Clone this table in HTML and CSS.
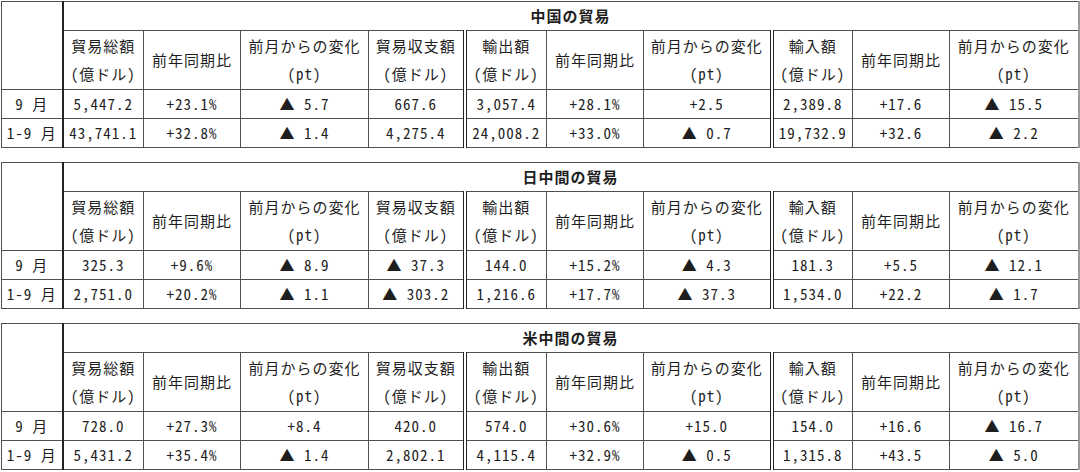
FILE: index.html
```html
<!DOCTYPE html>
<html lang="ja">
<head>
<meta charset="utf-8">
<link rel="stylesheet" href="styles.css">
</head>
<body>
<div class="page">

<table class="trade">
<colgroup>
<col class="c0"><col class="c1"><col class="c2"><col class="c3"><col class="c4"><col class="c5"><col class="c6"><col class="c7"><col class="c8"><col class="c9"><col class="c10">
</colgroup>
<tr class="r-title"><td class="lead" rowspan="2"></td><td class="title" colspan="10">中国の貿易</td></tr>
<tr class="r-head">
<td>貿易総額<br>（億ドル）</td><td>前年同期比</td><td>前月からの変化<br>（pt）</td><td>貿易収支額<br>（億ドル）</td>
<td class="dbl">輸出額<br>（億ドル）</td><td>前年同期比</td><td>前月からの変化<br>（pt）</td>
<td class="dbl">輸入額<br>（億ドル）</td><td>前年同期比</td><td>前月からの変化<br>（pt）</td>
</tr>
<tr class="r-data"><td class="lead">9 月</td><td>5,447.2</td><td>+23.1%</td><td>▲ 5.7</td><td>667.6</td><td class="dbl">3,057.4</td><td>+28.1%</td><td>+2.5</td><td class="dbl">2,389.8</td><td>+17.6</td><td>▲ 15.5</td></tr>
<tr class="r-data"><td class="lead">1-9 月</td><td>43,741.1</td><td>+32.8%</td><td>▲ 1.4</td><td>4,275.4</td><td class="dbl">24,008.2</td><td>+33.0%</td><td>▲ 0.7</td><td class="dbl">19,732.9</td><td>+32.6</td><td>▲ 2.2</td></tr>
</table>

<table class="trade">
<colgroup>
<col class="c0"><col class="c1"><col class="c2"><col class="c3"><col class="c4"><col class="c5"><col class="c6"><col class="c7"><col class="c8"><col class="c9"><col class="c10">
</colgroup>
<tr class="r-title"><td class="lead" rowspan="2"></td><td class="title" colspan="10">日中間の貿易</td></tr>
<tr class="r-head">
<td>貿易総額<br>（億ドル）</td><td>前年同期比</td><td>前月からの変化<br>（pt）</td><td>貿易収支額<br>（億ドル）</td>
<td class="dbl">輸出額<br>（億ドル）</td><td>前年同期比</td><td>前月からの変化<br>（pt）</td>
<td class="dbl">輸入額<br>（億ドル）</td><td>前年同期比</td><td>前月からの変化<br>（pt）</td>
</tr>
<tr class="r-data"><td class="lead">9 月</td><td>325.3</td><td>+9.6%</td><td>▲ 8.9</td><td>▲ 37.3</td><td class="dbl">144.0</td><td>+15.2%</td><td>▲ 4.3</td><td class="dbl">181.3</td><td>+5.5</td><td>▲ 12.1</td></tr>
<tr class="r-data"><td class="lead">1-9 月</td><td>2,751.0</td><td>+20.2%</td><td>▲ 1.1</td><td>▲ 303.2</td><td class="dbl">1,216.6</td><td>+17.7%</td><td>▲ 37.3</td><td class="dbl">1,534.0</td><td>+22.2</td><td>▲ 1.7</td></tr>
</table>

<table class="trade">
<colgroup>
<col class="c0"><col class="c1"><col class="c2"><col class="c3"><col class="c4"><col class="c5"><col class="c6"><col class="c7"><col class="c8"><col class="c9"><col class="c10">
</colgroup>
<tr class="r-title"><td class="lead" rowspan="2"></td><td class="title" colspan="10">米中間の貿易</td></tr>
<tr class="r-head">
<td>貿易総額<br>（億ドル）</td><td>前年同期比</td><td>前月からの変化<br>（pt）</td><td>貿易収支額<br>（億ドル）</td>
<td class="dbl">輸出額<br>（億ドル）</td><td>前年同期比</td><td>前月からの変化<br>（pt）</td>
<td class="dbl">輸入額<br>（億ドル）</td><td>前年同期比</td><td>前月からの変化<br>（pt）</td>
</tr>
<tr class="r-data"><td class="lead">9 月</td><td>728.0</td><td>+27.3%</td><td>+8.4</td><td>420.0</td><td class="dbl">574.0</td><td>+30.6%</td><td>+15.0</td><td class="dbl">154.0</td><td>+16.6</td><td>▲ 16.7</td></tr>
<tr class="r-data"><td class="lead">1-9 月</td><td>5,431.2</td><td>+35.4%</td><td>▲ 1.4</td><td>2,802.1</td><td class="dbl">4,115.4</td><td>+32.9%</td><td>▲ 0.5</td><td class="dbl">1,315.8</td><td>+43.5</td><td>▲ 5.0</td></tr>
</table>

</div>
</body>
</html>
```
FILE: styles.css
```css
html, body {
  margin: 0;
  padding: 0;
  background: #ffffff;
}

.page {
  padding: 1px 0 0 1px;
  display: flex;
  flex-direction: column;
  gap: 14px;
}

.trade {
  border-collapse: collapse;
  table-layout: fixed;
  width: 1077px;
  font-family: "Noto Sans CJK JP", "Noto Sans", sans-serif;
  font-feature-settings: "hwid" 1;
  font-size: 15px;
  letter-spacing: 1px;
  color: #1e1e1e;
  border-top: 1px solid #8a8a8a;
  border-right: 2px solid #9a9a9a;
  border-bottom: 1px solid #8a8a8a;
  border-left: 1px solid #444;
}

.c0 { width: 61px; }
.c1 { width: 81px; }
.c2 { width: 97px; }
.c3 { width: 128px; }
.c4 { width: 96px; }
.c5 { width: 82px; }
.c6 { width: 97px; }
.c7 { width: 128px; }
.c8 { width: 81px; }
.c9 { width: 97px; }
.c10 { width: 129px; }

.trade td {
  border: 1px solid #505050;
  text-align: center;
  vertical-align: middle;
  padding: 0;
  white-space: nowrap;
  overflow: hidden;
}

.trade td.lead {
  border-right: 2px solid #222;
}

.trade td.dbl {
  border-left: 4px double #222;
}

.r-title td { height: 28px; }
.r-title td.title {
  font-weight: 700;
  letter-spacing: 1px;
  line-height: 28px;
}

.r-head td {
  height: 58px;
  line-height: 28px;
}

.r-data td {
  height: 28px;
  line-height: 28px;
}
```
